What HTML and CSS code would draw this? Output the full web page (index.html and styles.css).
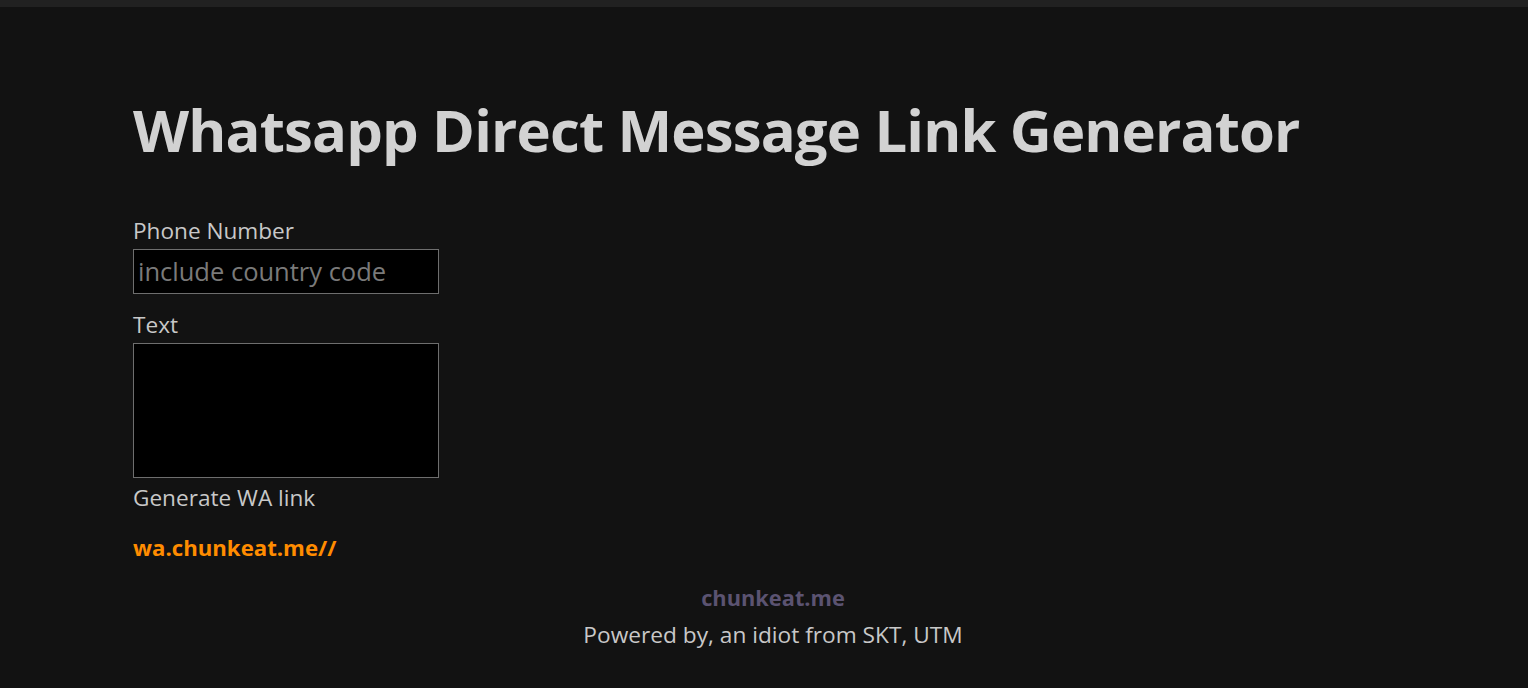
FILE: index.html
```html
<!DOCTYPE html>
<html lang="en">
<head>
<meta charset="utf-8">
<title>Whatsapp Direct Message Link Generator</title>
<link rel="stylesheet" href="styles.css">
</head>
<body>
<div class="topbar"></div>
<main class="main">
  <h1 class="title">Whatsapp Direct Message Link Generator</h1>
  <form class="form">
    <label class="label" for="phone">Phone Number</label>
    <input class="input" id="phone" type="text" placeholder="include country code">
    <label class="label label-text" for="text">Text</label>
    <textarea class="textarea" id="text"></textarea>
    <span class="generate">Generate WA link</span>
  </form>
  <a class="result" href="#">wa.chunkeat.me//</a>
</main>
<footer class="footer">
  <a class="site" href="#">chunkeat.me</a>
  <p class="powered">Powered by, an idiot from SKT, UTM</p>
</footer>
</body>
</html>
```
FILE: styles.css
```css
html, body {
  margin: 0;
  padding: 0;
  background: #121212;
  height: 100%;
}
body {
  font-family: "Open Sans", "Noto Sans", sans-serif;
  color: #c8c8c8;
}
.topbar {
  height: 7px;
  background: #212121;
}
.main {
  padding: 88px 133px 0;
}
.title {
  margin: 0;
  font-size: 58px;
  font-weight: 700;
  letter-spacing: -0.85px;
  color: #d2d2d2;
  line-height: 1.2;
}
.form {
  display: flex;
  flex-direction: column;
  align-items: flex-start;
  margin-top: 51px;
}
.label {
  font-size: 22.6px;
  line-height: 30px;
  margin-bottom: 3px;
}
.label-text {
  margin-top: 16px;
}
.input {
  box-sizing: border-box;
  width: 306px;
  height: 45px;
  background: #000;
  border: 1px solid #6e6e6e;
  font-family: inherit;
  font-size: 25.5px;
  color: #c8c8c8;
  padding: 0 4px;
  margin: 0;
  outline: none;
}
.input::placeholder {
  color: #7a7a7a;
}
.textarea {
  box-sizing: border-box;
  width: 306px;
  height: 135px;
  background: #000;
  border: 1px solid #6e6e6e;
  margin: 0;
  resize: none;
  outline: none;
}
.generate {
  font-size: 22.6px;
  line-height: 30px;
  margin-top: 5px;
}
.result {
  display: inline-block;
  margin-top: 20px;
  font-size: 22.2px;
  line-height: 30px;
  font-weight: 700;
  color: #ff8c00;
  text-decoration: none;
}
.footer {
  display: flex;
  flex-direction: column;
  align-items: center;
  margin-top: 20px;
  padding-left: 18px;
}
.site {
  font-size: 21.8px;
  font-weight: 700;
  color: #5b5371;
  text-decoration: none;
  line-height: 30px;
}
.powered {
  margin: 7px 0 0;
  font-size: 22.7px;
  line-height: 30px;
}
```
